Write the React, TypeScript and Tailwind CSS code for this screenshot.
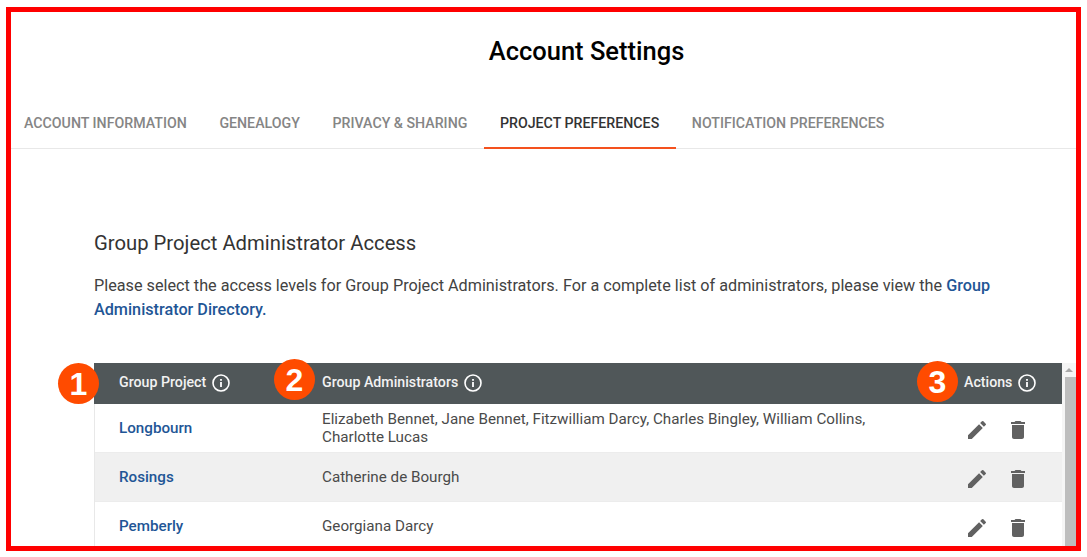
const tabs = ["ACCOUNT INFORMATION", "GENEALOGY", "PRIVACY & SHARING", "PROJECT PREFERENCES", "NOTIFICATION PREFERENCES"];

const rows = [
  { name: "Longbourn", admins: "Elizabeth Bennet, Jane Bennet, Fitzwilliam Darcy, Charles Bingley, William Collins, Charlotte Lucas", bg: "bg-white" },
  { name: "Rosings", admins: "Catherine de Bourgh", bg: "bg-[#f0f0f0]" },
  { name: "Pemberly", admins: "Georgiana Darcy", bg: "bg-white" },
];

function InfoIcon() {
  return (
    <svg width="18" height="18" viewBox="0 0 18 18" fill="none" className="shrink-0">
      <circle cx="9" cy="9" r="8" stroke="#fff" strokeWidth="1.6" />
      <rect x="8.1" y="8" width="1.8" height="5" fill="#fff" />
      <rect x="8.1" y="5" width="1.8" height="1.8" fill="#fff" />
    </svg>
  );
}

function PencilIcon() {
  return (
    <svg width="24" height="24" viewBox="0 0 24 24" fill="#616161">
      <path d="M3 17.25V21h3.75L17.81 9.94l-3.75-3.75L3 17.25zM20.71 7.04a1 1 0 0 0 0-1.41l-2.34-2.34a1 1 0 0 0-1.41 0l-1.83 1.83 3.75 3.75 1.83-1.83z" />
    </svg>
  );
}

function TrashIcon() {
  return (
    <svg width="24" height="24" viewBox="0 0 24 24" fill="#616161">
      <path d="M6 19c0 1.1.9 2 2 2h8c1.1 0 2-.9 2-2V7H6v12zM19 4h-3.5l-1-1h-5l-1 1H5v2h14V4z" />
    </svg>
  );
}

function Badge({ n, className }: { n: number; className: string }) {
  return (
    <div className={`absolute w-[41px] h-[41px] rounded-full bg-[#ff4b00] text-white flex items-center justify-center text-[32px] font-bold font-['Liberation_Sans',sans-serif] ${className}`}>
      {n}
    </div>
  );
}

export default function App() {
  return (
    <div className="w-[1087px] h-[557px] bg-white pl-[6px] pt-[7px] overflow-hidden font-['Roboto',sans-serif]">
      <div className="relative w-[1075px] h-[544px] border-[5px] border-[#ff0000] overflow-hidden flex flex-col">
        <h1 className="shrink-0 text-center text-[25.5px] leading-[28px] font-medium text-black pt-[25px] pl-[86px]">Account Settings</h1>

        <div className="shrink-0 flex mt-[29px] h-[55px] border-b border-[#e8e8e8]">
          {tabs.map((t) => (
            <div
              key={t}
              className={`px-[16.3px] pt-[21px] text-[14.2px] leading-[16px] font-medium -mb-px first:pl-[13px] ${t === "PROJECT PREFERENCES" ? "text-[#333] border-b-2 border-[#f4511e]" : "text-[#858585]"}`}
            >
              {t}
            </div>
          ))}
        </div>

        <div className="shrink-0 pl-[83px] flex flex-col">
          <h2 className="mt-[82px] text-[20.25px] leading-[24px] text-[#333]">Group Project Administrator Access</h2>
          <p className="mt-[19px] text-[16.22px] leading-[24px] text-[#424242] w-[930px]">
            Please select the access levels for Group Project Administrators. For a complete list of administrators, please view the{" "}
            <span className="font-medium text-[#1f5696]">Group Administrator Directory.</span>
          </p>

          <div className="mt-[41px] flex w-[982px]">
            <div className="w-[968px] border-l border-[#e8e8e8]">
              <div className="flex items-center h-[41px] pb-[1px] -ml-px bg-[#505759] text-[14.2px] font-medium text-[#f2f2f2]">
                <div className="w-[228px] pl-[25px] flex items-center gap-[6px]">Group Project <InfoIcon /></div>
                <div className="flex-1 flex items-center gap-[6px]">Group Administrators <InfoIcon /></div>
                <div className="w-[98px] flex items-center gap-[6px] -ml-[1px]">Actions <InfoIcon /></div>
              </div>
              {rows.map((r) => (
                <div key={r.name} className={`flex items-center h-[49px] border-b border-[#ececec] ${r.bg}`}>
                  <div className="w-[227px] pl-[24px] text-[15.2px] font-medium text-[#1f5696]">{r.name}</div>
                  <div className="flex-1 text-[15.2px] leading-[18.5px] text-[#4a4a4a] pr-[90px]">{r.admins}</div>
                  <div className="w-[98px] flex items-center gap-[17px] pt-[3px] pl-[1px]">
                    <PencilIcon />
                    <TrashIcon />
                  </div>
                </div>
              ))}
            </div>
            <div className="w-[14px] bg-[#f5f5f5] flex flex-col">
              <div className="h-[14px] flex items-center justify-center">
                <div className="w-0 h-0 border-x-[4px] border-x-transparent border-b-[4px] border-b-[#a8a8a8]" />
              </div>
              <div className="flex-1 bg-[#bdbdbd] ml-[3px]" />
            </div>
          </div>
        </div>

        <Badge n={1} className="left-[47px] top-[351px]" />
        <Badge n={2} className="left-[263px] top-[347px]" />
        <Badge n={3} className="left-[906px] top-[349px]" />
      </div>
    </div>
  );
}
